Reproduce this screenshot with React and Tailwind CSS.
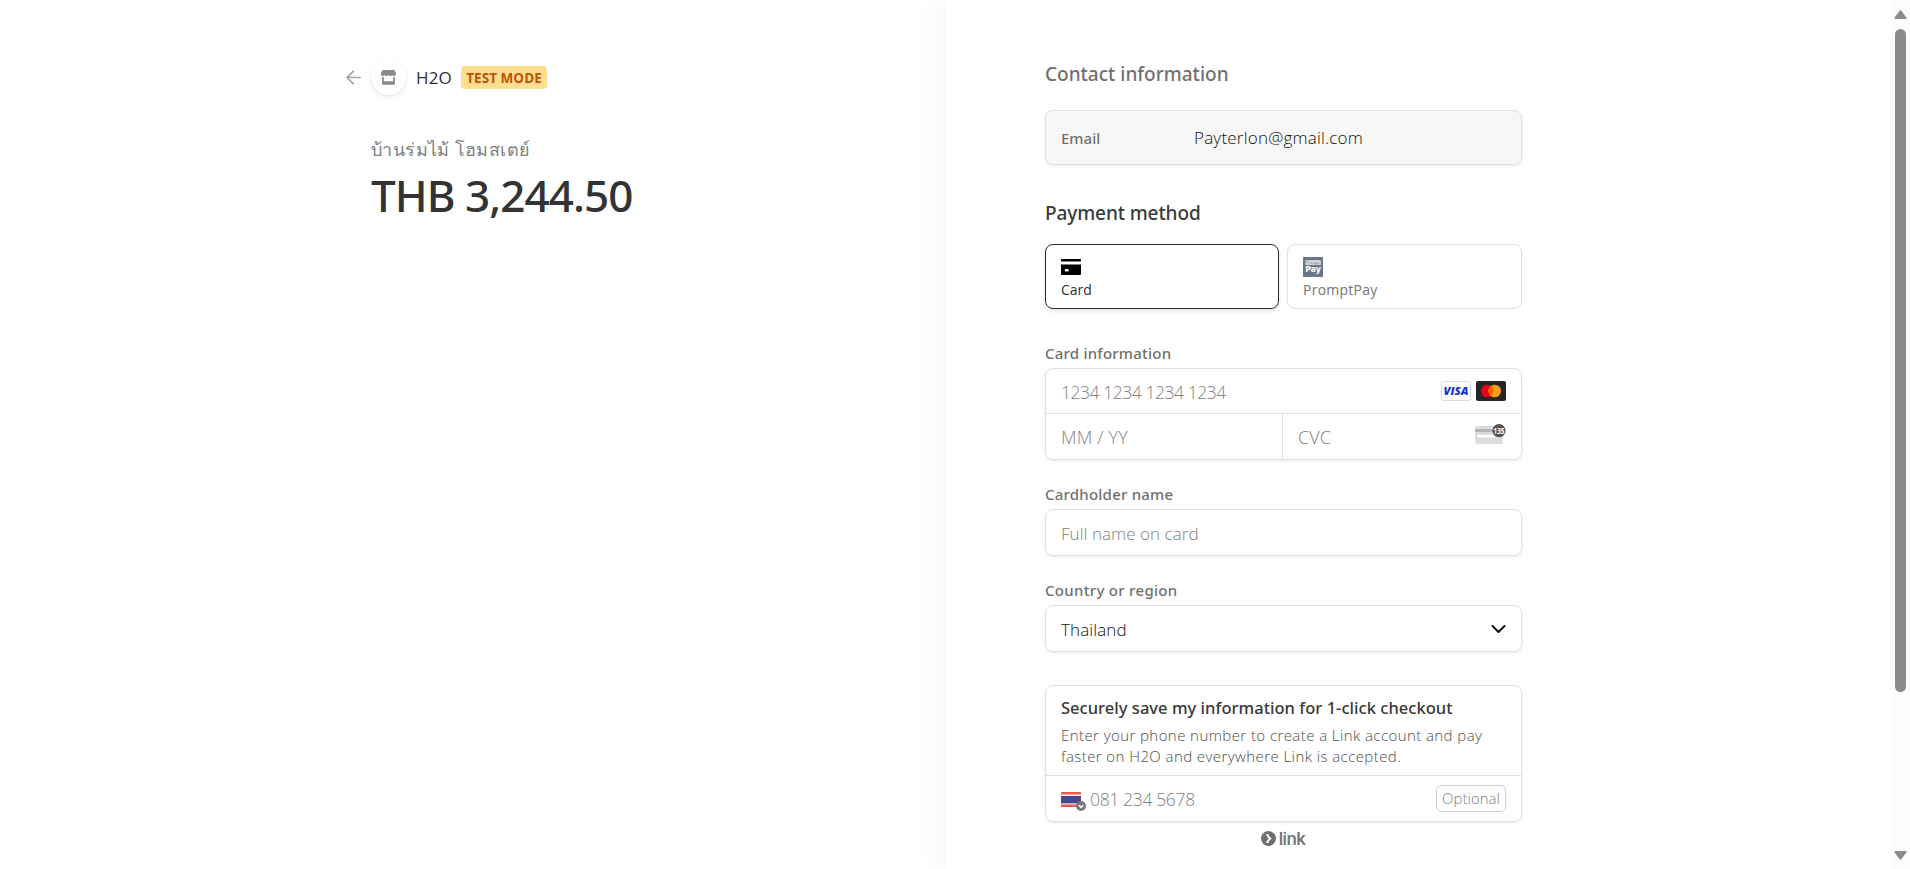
const noto = "font-['Noto_Sans','Open_Sans',sans-serif]";
const field =
  "rounded-lg border border-[#e0e0e0] shadow-[0_1px_3px_rgba(0,0,0,0.09)]";
const placeholder = "font-light text-[#808080]";

function BackArrow() {
  return (
    <svg className="h-[15px] w-[15px]" viewBox="0 0 15 15" fill="none" stroke="#a3a3a3" strokeWidth="1.7" strokeLinecap="round" strokeLinejoin="round">
      <path d="M14.200 7.500H1M7.200 1.300L1 7.500l6.200 6.200" />
    </svg>
  );
}

function StoreIcon() {
  return (
    <svg className="h-[15px] w-[15px]" viewBox="0 0 15 15" fill="#8b8b8b">
      <path d="M2.2 0h10.6c.5 0 .8.2 1 .6L15 3.3v.9c0 1-.8 1.7-1.8 1.7-.8 0-1.4-.4-1.8-1-.4.6-1.100 1-1.900 1s-1.600-.4-2-1c-.4.6-1.200 1-2 1s-1.500-.4-1.900-1c-.4.6-1 1-1.800 1C.8 5.900 0 5.200 0 4.200v-.9L1.200.6c.2-.4.5-.6 1-.6z" />
      <path d="M1 7h1.800v4.300h9.400V7H14v6.500c0 .8-.5 1.300-1.300 1.300H2.300C1.500 14.800 1 14.300 1 13.500z" />
    </svg>
  );
}

function CardIcon() {
  return (
    <svg className="h-4 w-5" viewBox="0 0 20 16">
      <path d="M1 0h18a1 1 0 0 1 1 1v1.500H0V1a1 1 0 0 1 1-1z" />
      <path fillRule="evenodd" d="M0 5.500h20V15a1 1 0 0 1-1 1H1a1 1 0 0 1-1-1zM5 10a1.200 1.200 0 0 0 0 2.500h1.600a1.200 1.200 0 0 0 0-2.500z" />
    </svg>
  );
}

function PromptPayIcon() {
  return (
    <svg className="h-5 w-5" viewBox="0 0 20 20">
      <path fill="#6a7689" d="M0 0h20v20H0z" />
      <path fill="#e6e9ee" d="M2.500 3.300h15.300v4.500H2.500z" />
      <text x="10.100" y="6.900" textAnchor="middle" fontFamily="Open Sans" fontSize="3.600" fontWeight="700" fill="#8c96a5">Prompt</text>
      <text x="10.200" y="15.400" textAnchor="middle" fontFamily="Inter" fontSize="8.200" fontWeight="800" fill="#fff" textLength="15.500" lengthAdjust="spacingAndGlyphs">Pay</text>
    </svg>
  );
}

function VisaIcon() {
  return (
    <svg className="h-5 w-[30px]" viewBox="0 0 30 20">
      <rect x=".5" y=".5" width="29" height="19" rx="1.500" fill="#fff" stroke="#dcdcdc" />
      <text x="15" y="14" textAnchor="middle" fontFamily="Open Sans" fontSize="11" fontWeight="800" fontStyle="italic" fill="#1434cb" textLength="25" lengthAdjust="spacingAndGlyphs">VISA</text>
    </svg>
  );
}

function MastercardIcon() {
  return (
    <svg className="h-5 w-[30px]" viewBox="0 0 30 20">
      <rect width="30" height="20" rx="2" fill="#252525" />
      <circle cx="11.300" cy="10" r="6.300" fill="#eb001b" />
      <circle cx="18.700" cy="10" r="6.300" fill="#f79e1b" />
      <path d="M15 4.900a6.300 6.300 0 0 1 0 10.200 6.300 6.300 0 0 1 0-10.200z" fill="#ff5f00" />
    </svg>
  );
}

function CvcIcon() {
  return (
    <svg className="h-5 w-[31px]" viewBox="0 0 31 20">
      <rect y="2" width="28" height="18" rx="2" fill="#dcdcdc" />
      <path d="M0 5h28v3H0z" fill="#b4b4b4" />
      <path d="M2 11h18v2.500H2z" fill="#fff" />
      <circle cx="24" cy="6.700" r="6.600" fill="#545454" />
      <text x="24" y="9.500" textAnchor="middle" fontFamily="Open Sans" fontSize="8" fontWeight="700" fill="#fff" textLength="11" lengthAdjust="spacingAndGlyphs">135</text>
    </svg>
  );
}

function FlagPicker() {
  return (
    <svg className="h-[19px] w-[25px]" viewBox="0 0 25 19">
      <rect width="20" height="15" rx=".8" fill="#fff" />
      <path d="M.6 0h18.800l.6.600V2.600H0V.6zM0 12.600h20v1.800l-.6.600H.6L0 14.400z" fill="#e8594f" />
      <path d="M0 4h20v7.400H0z" fill="#46478f" />
      <circle cx="20" cy="14" r="5" fill="#777" />
      <path d="M17.800 13.200l2.200 2.200 2.200-2.200" fill="none" stroke="#fff" strokeWidth="1.500" />
    </svg>
  );
}

function ScrollArrow({ down }) {
  return (
    <svg className="h-[9px] w-[13px]" viewBox="0 0 13 9" fill="#8b8b8b">
      <path d={down ? "M1.300 0h10.400q1.300.2.700 1.500L7.300 8.300q-.8.900-1.600 0L.6 1.500Q0 .2 1.300 0z" : "M1.300 9h10.400q1.300-.2.700-1.500L7.300.7q-.8-.9-1.600 0L.6 7.500Q0 8.800 1.300 9z"} />
    </svg>
  );
}

function Label({ children, className }) {
  return <div className={`${noto} h-[22px] text-[15px] leading-[22px] font-medium text-[#707070] ${className}`}>{children}</div>;
}

export default function App() {
  return (
    <div className="flex h-[869px] w-[1910px] overflow-hidden bg-white font-['Open_Sans',sans-serif] text-[#303030]">
      <section className="w-[946px] pt-[60px] pl-[346px]">
        <header className="flex h-[35px] items-center">
          <BackArrow />
          <div className="ml-[10px] flex h-[35px] w-[35px] items-center justify-center rounded-full bg-white shadow-[0_2px_5px_rgba(60,66,87,0.10),0_1px_2px_rgba(0,0,0,0.05)]">
            <StoreIcon />
          </div>
          <span className="ml-[10px] w-[45px] text-[17px] tracking-[0.1px]">H2O</span>
          <span className="h-[23px] w-[86px] rounded bg-[#ffde92] text-center text-[13.5px] leading-[24px] font-bold tracking-[0.05px] whitespace-nowrap text-[#bb5504]">TEST MODE</span>
        </header>
        <div className="mt-[39px] ml-[25px] h-[30px] text-[18px] leading-[30px] tracking-[0.38px] text-[#808080]">บ้านร่มไม้ โฮมสเตย์</div>
        <div className={`${noto} mt-[6px] ml-[25px] h-[50px] text-[44px] leading-[50px] font-medium tracking-[-0.95px] text-[#333]`}>THB 3,244.50</div>
      </section>

      <main className="w-[945px] pt-[60px] pl-[99px] shadow-[-12px_0_28px_-4px_rgba(0,0,0,0.045)]">
        <div className="w-[477px]">
          <h2 className={`${noto} h-7 text-[19px] leading-7 font-medium text-[#707070]`}>Contact information</h2>
          <div className={`${field} mt-[22px] flex h-[55px] items-center bg-[#f7f7f7] pl-[15px]`}>
            <span className={`${noto} w-[133px] pt-px text-[15px] font-medium text-[#707070]`}>Email</span>
            <span className="text-[17px] font-light tracking-[0.21px] text-[#111]">Payterlon@gmail.com</span>
          </div>

          <h2 className={`${noto} mt-[34px] h-7 text-[19px] leading-7 font-medium tracking-[-0.1px] text-[#3a3a3a]`}>Payment method</h2>
          <div className="mt-[17px] flex h-[65px] gap-2 text-[14px] leading-5">
            <div className="w-[234px] rounded-lg border border-[#2b2b2b] pt-[14px] pl-[15px] shadow-[0_2px_4px_rgba(0,0,0,0.11)]">
              <CardIcon />
              <div className="mt-[5px]">Card</div>
            </div>
            <div className="w-[235px] rounded-lg border border-[#e0e0e0] pt-[12px] pl-[15px] text-[#757575]">
              <PromptPayIcon />
              <div className="mt-[3px] tracking-[0.25px]">PromptPay</div>
            </div>
          </div>

          <Label className="mt-[33px] tracking-[0.22px]">Card information</Label>
          <div className={`${field} mt-[4px] h-[92px]`}>
            <div className="flex h-[45px] items-center border-b border-[#e0e0e0] pr-[15px] pl-[15px]">
              <span className={`${placeholder} grow pt-[3px] text-[17.5px] tracking-[-0.45px]`}>1234 1234 1234 1234</span>
              <VisaIcon />
              <span className="w-[5px]" />
              <MastercardIcon />
            </div>
            <div className="flex h-[45px]">
              <div className={`${placeholder} w-[237px] border-r border-[#e0e0e0] pt-px pl-[15px] text-[18px] leading-[45px] tracking-[0.2px]`}>MM / YY</div>
              <div className="flex grow items-center pr-[15px] pl-[15px]">
                <span className={`${placeholder} grow pt-[2px] text-[18px] tracking-[0.1px]`}>CVC</span>
                <div className="pb-[6px]"><CvcIcon /></div>
              </div>
            </div>
          </div>

          <Label className="mt-[23px] tracking-[0.22px]">Cardholder name</Label>
          <div className={`${field} ${placeholder} mt-[4px] h-[47px] pt-px pl-[15px] text-[17px] leading-[46px] tracking-[0.05px]`}>Full name on card</div>

          <Label className="mt-[23px] tracking-[0.3px]">Country or region</Label>
          <div className={`${field} mt-[4px] flex h-[47px] items-center justify-between pr-[15px] pl-[15px] text-[17px] font-light tracking-[0.1px]`}>
            <span className="pt-[2px] text-[#111]">Thailand</span>
            <svg className="mt-px h-2 w-[15px]" viewBox="0 0 15 8" fill="none" stroke="#111" strokeWidth="2" strokeLinecap="round" strokeLinejoin="round">
              <path d="M1.500 1l6 6 6-6" />
            </svg>
          </div>

          <div className={`${field} mt-[33px] h-[137px]`}>
            <div className="h-[90px] border-b border-[#e0e0e0] pt-[10px] pl-[15px]">
              <div className={`${noto} h-6 text-[16.5px] leading-6 font-medium tracking-[0.03px] text-[#383838]`}>Securely save my information for 1-click checkout</div>
              <p className="mt-[5px] text-[15px] leading-[21px] font-light tracking-[0.42px] text-[#4d4d4d]">
                Enter your phone number to create a Link account and pay<br />faster on H2O and everywhere Link is accepted.
              </p>
            </div>
            <div className="flex h-[45px] items-center pr-[15px] pl-[15px]">
              <div className="pt-[6px]"><FlagPicker /></div>
              <span className={`${placeholder} ml-[4px] grow pt-[2px] text-[17.5px] tracking-[-0.35px]`}>081 234 5678</span>
              <span className="h-[27px] w-[70px] rounded-[5px] border border-[#cfcfcf] text-center text-[15px] leading-[25px] font-light text-[#808080]">Optional</span>
            </div>
          </div>

          <div className="mt-[6px] mr-px flex h-[21px] items-center justify-center gap-[3px] text-[#777]">
            <svg className="h-[15px] w-[15px]" viewBox="0 0 15 15">
              <circle cx="7.500" cy="7.500" r="7.500" fill="#707070" />
              <path d="M5 3h2.300c.5 1.900 1.800 3.500 3.600 4.500-1.800 1-3.100 2.600-3.600 4.500H5c.5-1.700 1.500-3.300 2.900-4.500C6.500 6.300 5.500 4.700 5 3z" fill="#fff" />
            </svg>
            <span className="pt-px font-['Inter',sans-serif] text-[17px] leading-[21px] font-semibold tracking-[-0.6px]">link</span>
          </div>
        </div>
      </main>

      <aside className="flex w-[19px] flex-col items-center bg-[#fcfcfc] pt-[10px] pb-[9px]">
        <ScrollArrow />
        <div className="mt-[10px] h-[663px] w-[11px] rounded-full bg-[#8b8b8b]" />
        <div className="grow" />
        <ScrollArrow down />
      </aside>
    </div>
  );
}
